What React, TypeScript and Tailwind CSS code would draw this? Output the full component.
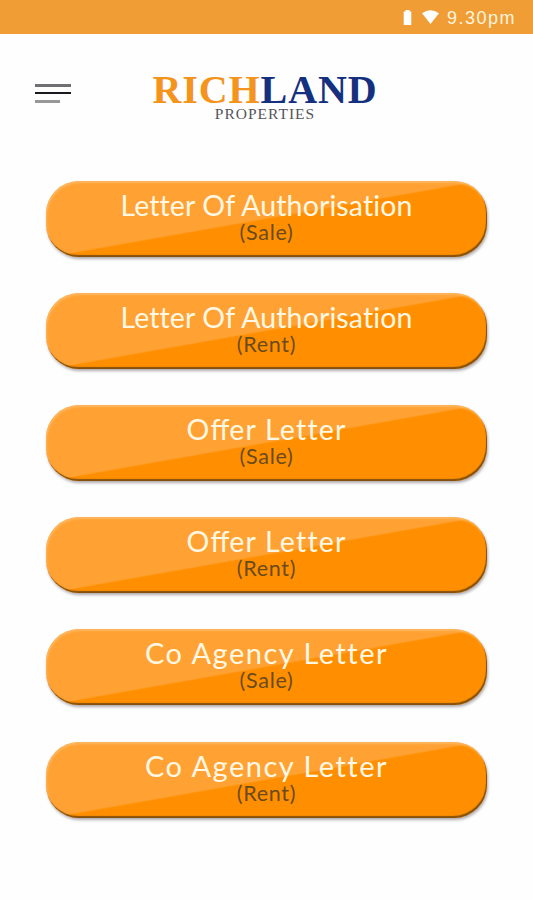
import type { ReactNode } from 'react';

const authorisation = <span className="text-[28.5px] tracking-[0.12px]">Letter Of Authorisation</span>;
const offer = (
  <span className="text-[28.5px] tracking-[1.2px]">
    O<span className="tracking-normal">ff</span>er Letter
  </span>
);
const coAgency = <span className="text-[29px] tracking-[1.5px]">Co Agency Letter</span>;

const letters: { id: string; title: ReactNode; kind: string }[] = [
  { id: 'authorisation-sale', title: authorisation, kind: '(Sale)' },
  { id: 'authorisation-rent', title: authorisation, kind: '(Rent)' },
  { id: 'offer-sale', title: offer, kind: '(Sale)' },
  { id: 'offer-rent', title: offer, kind: '(Rent)' },
  { id: 'agency-sale', title: coAgency, kind: '(Sale)' },
  { id: 'agency-rent', title: coAgency, kind: '(Rent)' },
];

function StatusBar() {
  return (
    <div className="flex h-[34px] items-center justify-end bg-[#f09d36] pr-[17px] text-white">
      <svg className="mr-[10px]" width="9" height="15" viewBox="0 0 9 15" fill="currentColor">
        <path d="M2.5 0h4v1.5H8.3V15H.7V1.5h1.8z" />
      </svg>
      <svg className="mr-[8px]" width="17" height="14" viewBox="0 0 17 14" fill="currentColor">
        <path d="M0 3.3Q8.5-3 17 3.3L8.5 14z" />
      </svg>
      <span className="pt-px font-['Liberation_Sans',sans-serif] text-[18px] leading-none tracking-[1.5px] text-[#fff5df]">9.30pm</span>
    </div>
  );
}

function Header() {
  return (
    <header className="flex h-[147px] items-start pl-[35px] pt-[40px]">
      <button aria-label="Menu" className="mt-[10px] flex w-9 flex-col">
        <span className="h-[2.5px] w-full bg-[#707074]" />
        <span className="mt-[5px] h-[2.5px] w-full bg-[#1c1820]" />
        <span className="mt-[6px] h-[2.5px] w-[25px] bg-[#98989a]" />
      </button>
      <div className="ml-[82px] flex w-[224px] flex-col items-center font-['Liberation_Serif',serif]">
        <div className="whitespace-nowrap text-[40px] font-bold leading-[32px] tracking-[0.9px] text-[#f4941c]">
          RICH<span className="text-[#15307f]">LAND</span>
        </div>
        <div className="text-[15.5px] leading-[16px] tracking-[1px] text-[#555559]">PROPERTIES</div>
      </div>
    </header>
  );
}

export default function App() {
  return (
    <div className="h-[900px] w-[533px] overflow-hidden bg-[#fefefe]">
      <StatusBar />
      <Header />
      <main className="flex flex-col gap-[36.12px] px-[46px]">
        {letters.map((item) => (
          <button
            key={item.id}
            className="flex h-[76px] w-[441px] flex-col items-center rounded-[33px] bg-[linear-gradient(170deg,#ffa233_49.2%,#ff8f00_50.4%)] pt-[7px] font-['Lato',sans-serif] shadow-[inset_-1px_-2px_1px_#85500c,inset_1px_2px_2px_#ffb75f,1px_2px_3px_#aeaaae]"
          >
            <span className="h-[34px] whitespace-nowrap leading-[34px] text-[#fff8e4]">{item.title}</span>
            <span className="text-[21.5px] leading-[20px] tracking-[0.7px] text-[#6b4a1b]">{item.kind}</span>
          </button>
        ))}
      </main>
    </div>
  );
}
